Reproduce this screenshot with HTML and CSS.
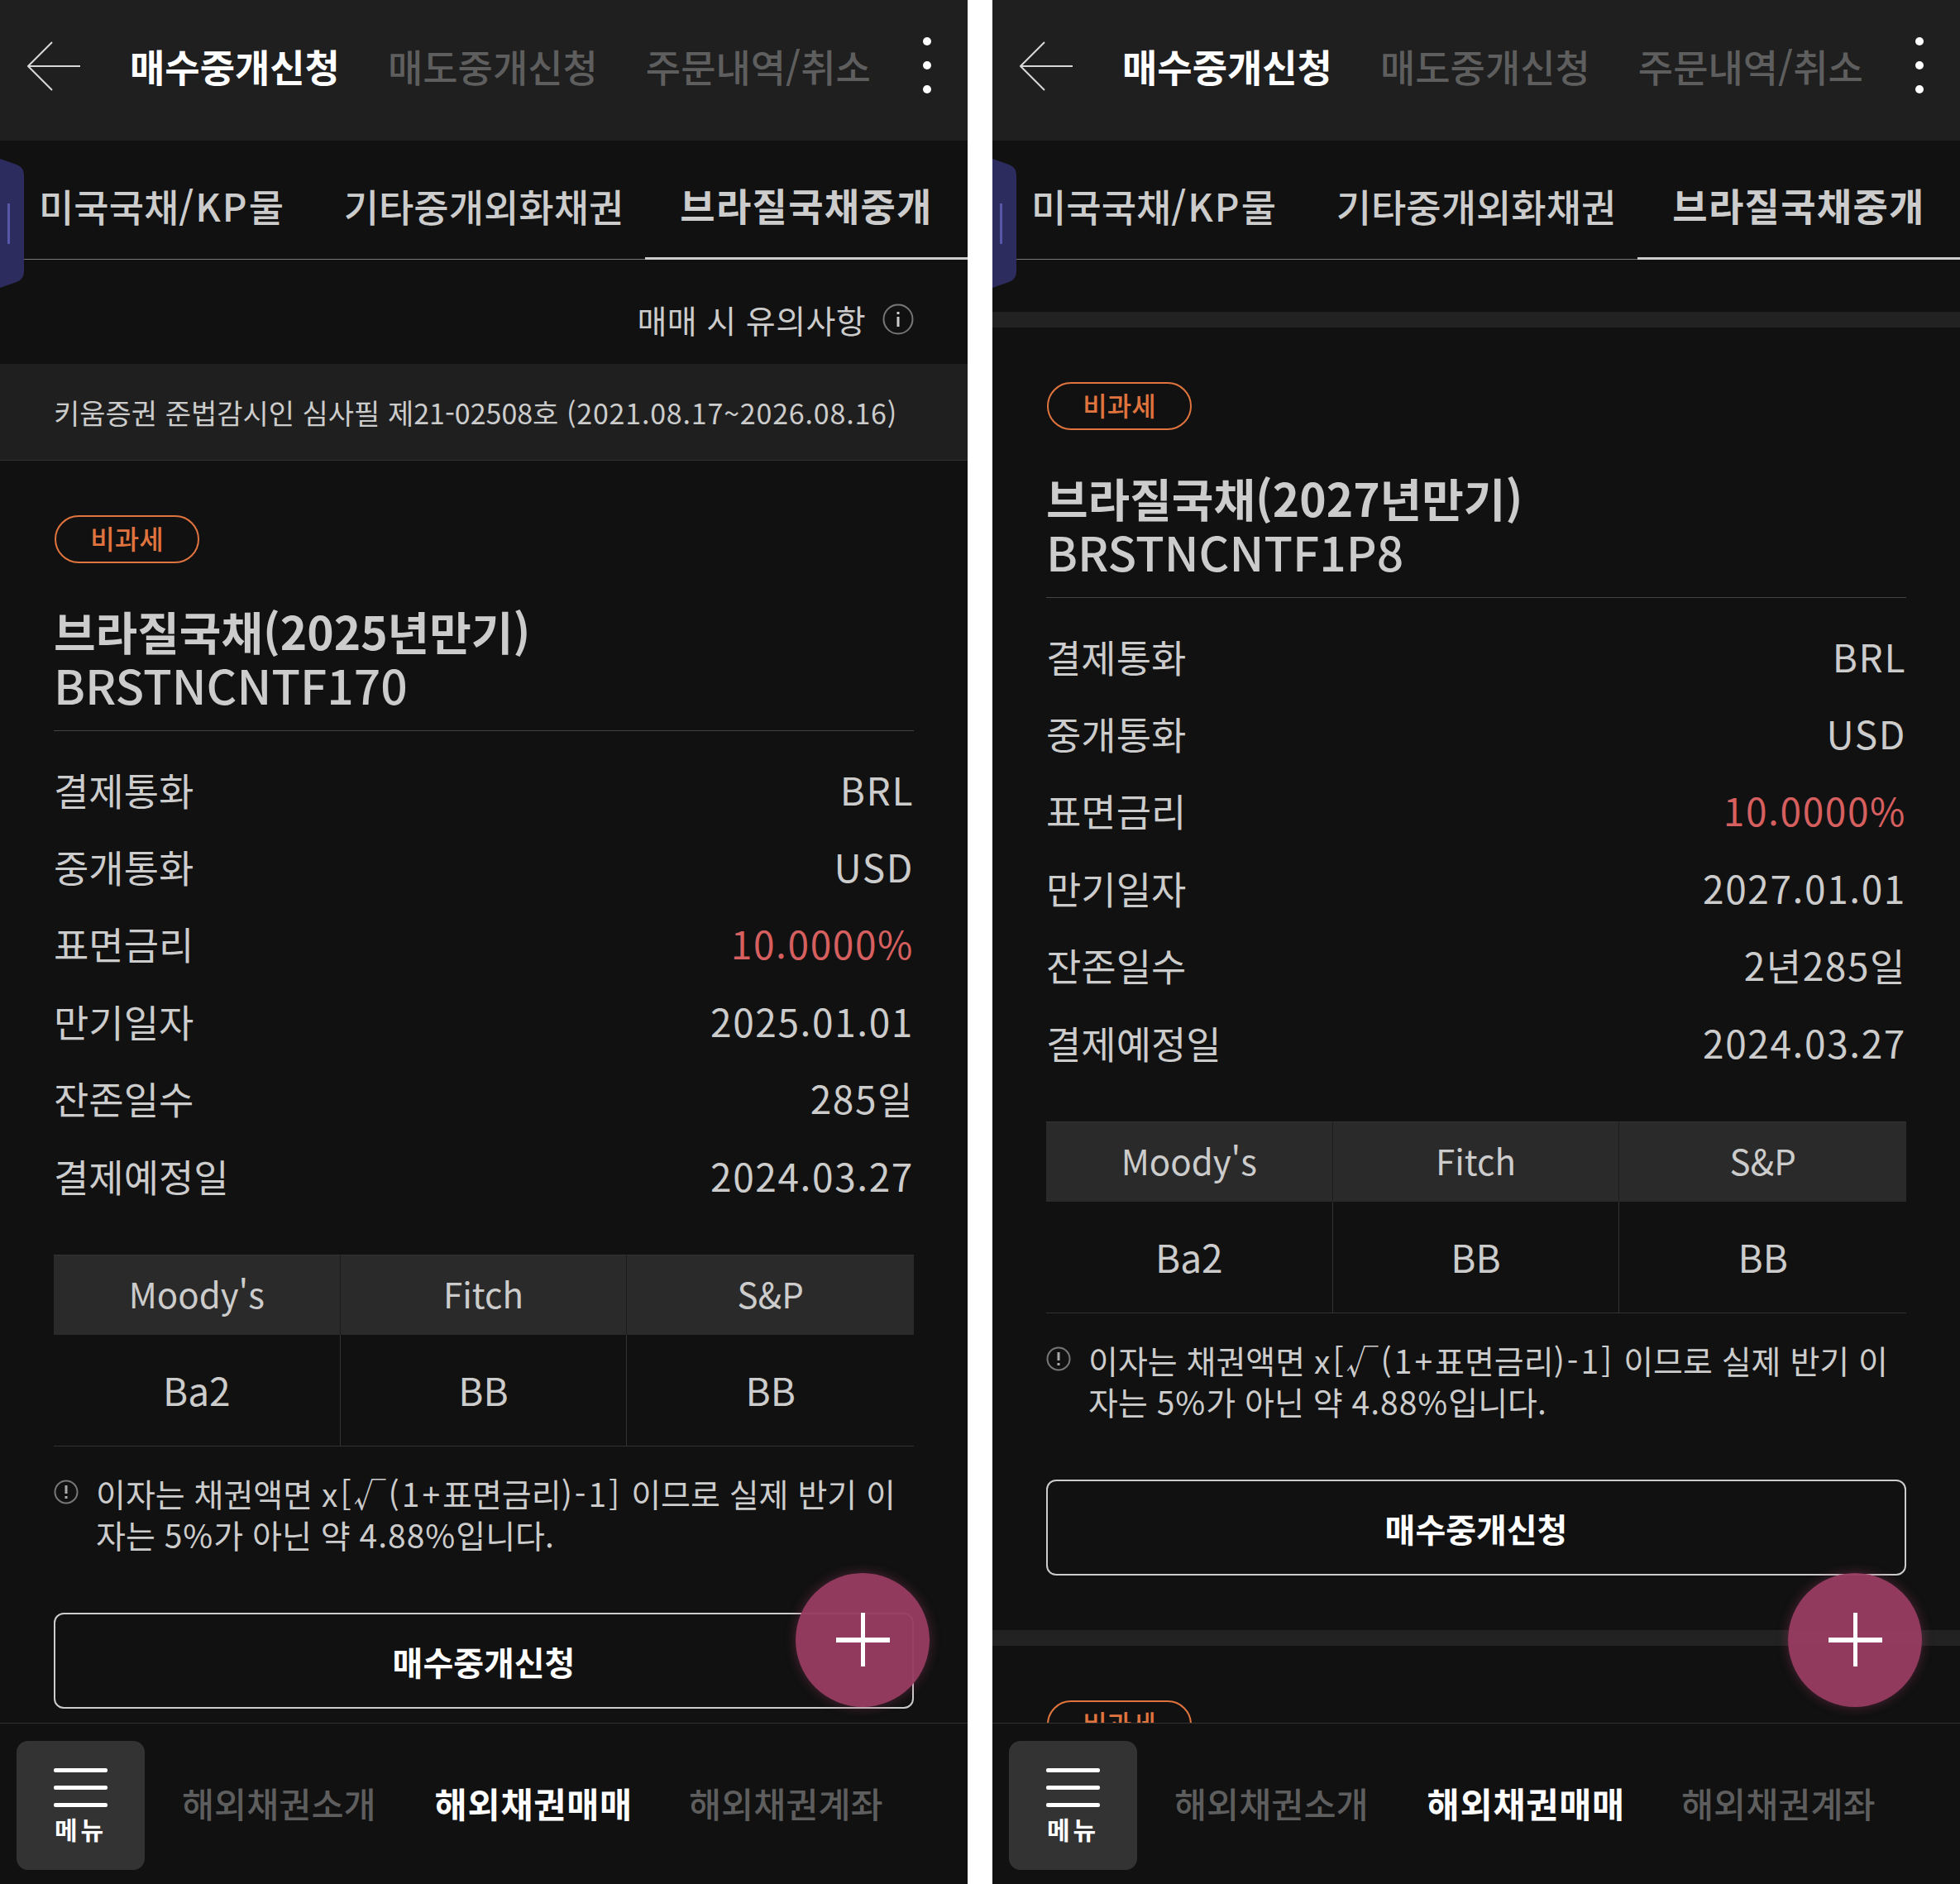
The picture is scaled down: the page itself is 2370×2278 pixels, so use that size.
FILE: index.html
```html
<!DOCTYPE html>
<html lang="ko">
<head>
    <meta charset="UTF-8">
    <meta name="viewport" content="width=device-width, initial-scale=1.0">
    <title>브라질국채중개</title>
    <link rel="stylesheet" href="styles.css">
</head>
<body>
    <div class="screens">
        <!-- left phone -->
        <section class="phone">
            <header class="top-bar">
                <svg class="back" viewBox="0 0 64 60"><path d="M30 1 L1 30 L30 59 M1 30 H64" fill="none" stroke="#d8d8d8" stroke-width="2"/></svg>
                <a class="top-link active">매수중개신청</a>
                <a class="top-link">매도중개신청</a>
                <a class="top-link">주문내역/취소</a>
                <div class="dots"><i></i><i></i><i></i></div>
            </header>
            <nav class="tabs">
                <a class="tab">미국국채<span class="kp">/KP</span>물</a>
                <a class="tab">기타중개외화채권</a>
                <a class="tab active">브라질국채중개</a>
            </nav>
            <svg class="handle" viewBox="0 0 29 156"><path d="M0 0 L20 7 Q29 10 29 20 V136 Q29 146 20 149 L0 156 Z" fill="#2c2d5e"/><rect x="9" y="54" width="3" height="49" fill="#5557a8"/></svg>
            <main class="content">
                <div class="notice-link">
                    <span>매매 시 유의사항</span>
                    <svg class="info" viewBox="0 0 38 38"><circle cx="19" cy="19" r="17.5" fill="none" stroke="#777" stroke-width="2"/><rect x="17.5" y="16" width="3" height="12" fill="#ccc"/><rect x="17.5" y="10" width="3" height="3" fill="#ccc"/></svg>
                </div>
                <div class="approval"><span>키움증권 준법감시인 심사필 제21-02508호 <span class="period">(2021.08.17~2026.08.16)</span></span></div>
                <article class="bond">
                    <span class="badge">비과세</span>
                    <h2 class="bond-title">브라질국채(2025년만기)<br><span class="bond-code">BRSTNCNTF170</span></h2>
                    <dl class="rows">
                        <div class="row"><dt>결제통화</dt><dd>BRL</dd></div>
                        <div class="row"><dt>중개통화</dt><dd>USD</dd></div>
                        <div class="row"><dt>표면금리</dt><dd class="rate">10.0000%</dd></div>
                        <div class="row"><dt>만기일자</dt><dd>2025.01.01</dd></div>
                        <div class="row"><dt>잔존일수</dt><dd>285일</dd></div>
                        <div class="row"><dt>결제예정일</dt><dd>2024.03.27</dd></div>
                    </dl>
                    <div class="ratings">
                        <div class="rating-head">Moody's</div><div class="rating-head">Fitch</div><div class="rating-head">S&amp;P</div>
                        <div class="rating-cell">Ba2</div><div class="rating-cell">BB</div><div class="rating-cell">BB</div>
                    </div>
                    <div class="note">
                        <svg class="warn" viewBox="0 0 30 30"><circle cx="15" cy="15" r="13.5" fill="none" stroke="#777" stroke-width="2"/><rect x="13.5" y="7" width="3" height="10" fill="#aaa"/><rect x="13.5" y="20" width="3" height="3" fill="#aaa"/></svg>
                        <p>이자는 채권액면 <span class="formula">x[√(1+</span>표면금리<span class="formula">)-1]</span> 이므로 실제 반기 이자는 <span class="num">5%</span>가 아닌 약 <span class="num">4.88%</span>입니다.</p>
                    </div>
                    <button class="order-btn">매수중개신청</button>
                </article>
            </main>
            <button class="fab"><span class="plus"></span></button>
            <footer class="bottom-bar">
                <div class="menu-btn">
                    <div class="bars"><i></i><i></i><i></i></div>
                    <span>메뉴</span>
                </div>
                <a class="bottom-link">해외채권소개</a>
                <a class="bottom-link active">해외채권매매</a>
                <a class="bottom-link">해외채권계좌</a>
            </footer>
        </section>

        <!-- right phone, scrolled down a bit -->
        <section class="phone">
            <header class="top-bar">
                <svg class="back" viewBox="0 0 64 60"><path d="M30 1 L1 30 L30 59 M1 30 H64" fill="none" stroke="#d8d8d8" stroke-width="2"/></svg>
                <a class="top-link active">매수중개신청</a>
                <a class="top-link">매도중개신청</a>
                <a class="top-link">주문내역/취소</a>
                <div class="dots"><i></i><i></i><i></i></div>
            </header>
            <nav class="tabs">
                <a class="tab">미국국채<span class="kp">/KP</span>물</a>
                <a class="tab">기타중개외화채권</a>
                <a class="tab active">브라질국채중개</a>
            </nav>
            <svg class="handle" viewBox="0 0 29 156"><path d="M0 0 L20 7 Q29 10 29 20 V136 Q29 146 20 149 L0 156 Z" fill="#2c2d5e"/><rect x="9" y="54" width="3" height="49" fill="#5557a8"/></svg>
            <main class="content scrolled">
                <article class="bond divided">
                    <span class="badge">비과세</span>
                    <h2 class="bond-title">브라질국채(2027년만기)<br><span class="bond-code">BRSTNCNTF1P8</span></h2>
                    <dl class="rows">
                        <div class="row"><dt>결제통화</dt><dd>BRL</dd></div>
                        <div class="row"><dt>중개통화</dt><dd>USD</dd></div>
                        <div class="row"><dt>표면금리</dt><dd class="rate">10.0000%</dd></div>
                        <div class="row"><dt>만기일자</dt><dd>2027.01.01</dd></div>
                        <div class="row"><dt>잔존일수</dt><dd>2년285일</dd></div>
                        <div class="row"><dt>결제예정일</dt><dd>2024.03.27</dd></div>
                    </dl>
                    <div class="ratings">
                        <div class="rating-head">Moody's</div><div class="rating-head">Fitch</div><div class="rating-head">S&amp;P</div>
                        <div class="rating-cell">Ba2</div><div class="rating-cell">BB</div><div class="rating-cell">BB</div>
                    </div>
                    <div class="note">
                        <svg class="warn" viewBox="0 0 30 30"><circle cx="15" cy="15" r="13.5" fill="none" stroke="#777" stroke-width="2"/><rect x="13.5" y="7" width="3" height="10" fill="#aaa"/><rect x="13.5" y="20" width="3" height="3" fill="#aaa"/></svg>
                        <p>이자는 채권액면 <span class="formula">x[√(1+</span>표면금리<span class="formula">)-1]</span> 이므로 실제 반기 이자는 <span class="num">5%</span>가 아닌 약 <span class="num">4.88%</span>입니다.</p>
                    </div>
                    <button class="order-btn">매수중개신청</button>
                </article>
                <article class="bond divided">
                    <span class="badge">비과세</span>
                </article>
            </main>
            <button class="fab"><span class="plus"></span></button>
            <footer class="bottom-bar">
                <div class="menu-btn">
                    <div class="bars"><i></i><i></i><i></i></div>
                    <span>메뉴</span>
                </div>
                <a class="bottom-link">해외채권소개</a>
                <a class="bottom-link active">해외채권매매</a>
                <a class="bottom-link">해외채권계좌</a>
            </footer>
        </section>
    </div>
</body>
</html>
```

FILE: styles.css
```css
* {
    box-sizing: border-box;
    margin: 0;
    padding: 0;
}
body {
    background: #fff;
    font-family: "Noto Sans CJK KR", "Noto Sans", sans-serif;
    color: #ccc;
}
.screens {
    display: grid;
    grid-template-columns: 1170px 1170px;
    gap: 30px;
    height: 2278px;
}
.phone {
    position: relative;
    display: flex;
    flex-direction: column;
    height: 2278px;
    overflow: hidden;
    background: #111;
}

/* top bar */
.top-bar {
    display: flex;
    align-items: center;
    height: 170px;
    padding: 0 0 12px 33px;
    background: #1f1f1f;
    flex-shrink: 0;
}
.back {
    width: 64px;
    height: 60px;
    margin-top: 2px;
    margin-right: 60px;
}
.top-link {
    font-size: 46px;
    font-weight: 500;
    color: #5e5e5e;
    margin-right: 58px;
    white-space: nowrap;
}
.top-link.active {
    color: #fff;
    font-weight: 700;
}
.dots {
    display: flex;
    flex-direction: column;
    gap: 19px;
    margin-left: auto;
    margin-right: 44px;
}
.dots i {
    display: block;
    width: 10px;
    height: 10px;
    border-radius: 50%;
    background: #fff;
}

/* tabs */
.tabs {
    display: flex;
    height: 144px;
    border-bottom: 1px solid #777;
    flex-shrink: 0;
}
.tab {
    flex: 1;
    display: flex;
    align-items: center;
    justify-content: center;
    padding-top: 12px;
    font-size: 46px;
    font-weight: 500;
    color: #ccc;
    white-space: nowrap;
}
.tab.active {
    font-weight: 700;
    letter-spacing: 1.3px;
    border-bottom: 3px solid #ccc;
    margin-bottom: -1px;
}
.kp {
    letter-spacing: 2px;
}
.handle {
    position: absolute;
    left: 0;
    top: 192px;
    width: 29px;
    height: 156px;
}

/* scroll area */
.content {
    flex: 1;
    min-height: 0;
    overflow: hidden;
}
.scrolled {
    padding-top: 63px;
}
.notice-link {
    display: flex;
    align-items: center;
    justify-content: flex-end;
    gap: 20px;
    height: 126px;
    padding: 18px 65px 0 0;
    font-size: 39px;
    letter-spacing: 0.4px;
}
.info {
    width: 38px;
    height: 38px;
}
.approval {
    display: flex;
    align-items: center;
    height: 117px;
    padding-left: 65px;
    background: #1f1f1f;
    border-bottom: 1px solid #333;
    font-size: 34px;
    white-space: nowrap;
}
.period {
    letter-spacing: 0.8px;
}
.bond {
    padding: 66px 65px 66px;
}
.bond.divided {
    border-top: 19px solid #222;
}
.badge {
    display: block;
    width: 175px;
    height: 58px;
    margin-left: 1px;
    line-height: 50px;
    border: 2px solid #e0743f;
    border-radius: 29px;
    color: #e0743f;
    font-size: 32px;
    font-weight: 500;
    text-align: center;
}
.bond-title {
    margin-top: 49px;
    padding-bottom: 22px;
    border-bottom: 1px solid #444;
    font-size: 55px;
    font-weight: 700;
    line-height: 65px;
    color: #ccc;
}
.bond-code {
    font-size: 57px;
    font-weight: 500;
}
.rows {
    padding: 23px 0 50px;
}
.row {
    display: flex;
    justify-content: space-between;
    align-items: center;
    height: 93.4px;
    font-size: 46px;
}
.row dd {
    letter-spacing: 1.6px;
}
.rate {
    color: #d65f5f;
}

/* ratings table */
.ratings {
    display: grid;
    grid-template-columns: repeat(3, 1fr);
    grid-template-rows: 97px 134px;
    border-bottom: 1px solid #333;
}
.rating-head {
    display: flex;
    align-items: center;
    justify-content: center;
    padding-bottom: 5px;
    background: #2a2a2a;
    border-top: 1px solid #333;
    border-right: 1px solid #1c1c1c;
    font-size: 42px;
}
.rating-cell {
    display: flex;
    align-items: center;
    justify-content: center;
    padding-bottom: 3px;
    border-right: 1px solid #333;
    font-size: 46px;
}
.rating-cell:last-child,
.rating-head:nth-child(3) {
    border-right: none;
}
.note {
    display: flex;
    gap: 21px;
    margin-top: 31px;
    font-size: 39px;
    line-height: 50px;
}
.formula {
    letter-spacing: 3px;
}
.num {
    letter-spacing: 1px;
}
.warn {
    width: 30px;
    height: 30px;
    margin-top: 9px;
    flex-shrink: 0;
}
.order-btn {
    display: block;
    width: 100%;
    height: 116px;
    margin-top: 70px;
    padding-top: 2px;
    background: none;
    border: 2px solid #ccc;
    border-radius: 12px;
    color: #fff;
    font-family: inherit;
    font-size: 40px;
    font-weight: 700;
}

/* floating plus */
.fab {
    position: absolute;
    left: 962px;
    top: 1902px;
    width: 162px;
    height: 162px;
    border: none;
    border-radius: 50%;
    background: rgba(152, 60, 97, 0.96);
    box-shadow: 0 0 14px rgba(152, 60, 97, 0.45);
}
.plus {
    position: absolute;
    left: 49px;
    top: 48px;
    width: 65px;
    height: 65px;
    background:
        linear-gradient(#fff, #fff) center / 65px 6px no-repeat,
        linear-gradient(#fff, #fff) center / 5px 65px no-repeat;
}

/* bottom bar */
.bottom-bar {
    display: flex;
    align-items: center;
    height: 195px;
    padding: 3px 0 0 20px;
    border-top: 1px solid #333;
    background: #111;
    flex-shrink: 0;
}
.menu-btn {
    display: flex;
    flex-direction: column;
    align-items: center;
    width: 155px;
    height: 156px;
    margin-right: 45px;
    padding-top: 33px;
    background: #333;
    border-radius: 14px;
    color: #fff;
    font-size: 30px;
    font-weight: 700;
    letter-spacing: 4px;
}
.bars {
    display: flex;
    flex-direction: column;
    gap: 16px;
    margin-bottom: 4px;
}
.bars i {
    display: block;
    width: 65px;
    height: 5px;
    border-radius: 2px;
    background: #fff;
}
.bottom-link {
    margin-right: 71px;
    margin-bottom: 6px;
    font-size: 42.5px;
    font-weight: 500;
    color: #5e5e5e;
    white-space: nowrap;
}
.bottom-link.active {
    margin-right: 68px;
    color: #fff;
    font-weight: 700;
    letter-spacing: 0.8px;
}
```
